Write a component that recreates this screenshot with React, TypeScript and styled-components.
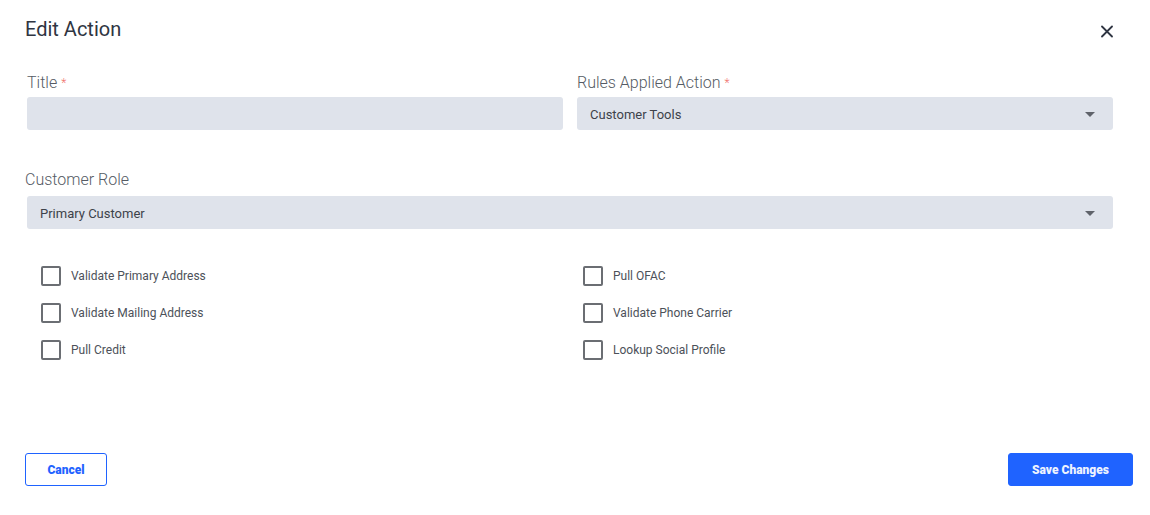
import styled, { createGlobalStyle } from 'styled-components';

const GlobalStyle = createGlobalStyle`
    body {
        margin: 0;
        background: #fff;
        font-family: Roboto, "Liberation Sans", Arial, sans-serif;
    }
`;

const Modal = styled.div`
    box-sizing: border-box;
    height: 515px;
    padding: 17px 17px 29px 25px;
    display: flex;
    flex-direction: column;
`;

const Header = styled.div`
    display: flex;
    justify-content: space-between;
    align-items: flex-start;
`;

const Heading = styled.h2`
    margin: 0;
    font-size: 20px;
    line-height: 24px;
    font-weight: 400;
    color: #2f3542;
`;

const CloseButton = styled.button`
    border: none;
    background: none;
    padding: 0;
    margin: 8px 20px 0 0;
    width: 12px;
    height: 13px;
    cursor: pointer;
    display: flex;
`;

const Form = styled.div`
    padding: 0 20px 0 2px;
`;

const Row = styled.div<{ $top: number }>`
    display: grid;
    grid-template-columns: 1fr 1fr;
    column-gap: 14px;
    margin-top: ${(p) => p.$top}px;
`;

const Field = styled.div<{ $wide?: boolean }>`
    grid-column: ${(p) => (p.$wide ? '1 / span 2' : 'auto')};
`;

const Label = styled.label<{ $shift?: number; $gap?: number }>`
    display: block;
    margin: 0 0 ${(p) => p.$gap ?? 4}px ${(p) => p.$shift ?? 0}px;
    font-size: 16px;
    line-height: 20px;
    font-weight: 300;
    color: #555b64;
`;

const Required = styled.span`
    color: #f0706a;
    font-size: 12px;
    vertical-align: top;
    margin-left: 4px;
`;

const Input = styled.div`
    height: 33px;
    border-radius: 3px;
    background: #dfe3eb;
`;

const Select = styled.div`
    box-sizing: border-box;
    height: 33px;
    border-radius: 3px;
    background: #dfe3eb;
    padding: 1px 18px 0 13px;
    display: flex;
    align-items: center;
    justify-content: space-between;
    font-size: 13px;
    color: #3d424a;
`;

const Caret = styled.span`
    width: 0;
    height: 0;
    border-left: 5px solid transparent;
    border-right: 5px solid transparent;
    border-top: 5px solid #5f636a;
`;

const Checks = styled.div`
    display: grid;
    grid-template-columns: 542px 542px;
    row-gap: 17px;
    margin-top: 37px;
    padding-left: 14px;
`;

const CheckItem = styled.label`
    display: flex;
    align-items: center;
    gap: 10px;
    font-size: 12px;
    color: #4c5159;
    cursor: pointer;
`;

const Box = styled.span`
    box-sizing: border-box;
    width: 20px;
    height: 20px;
    border: 2px solid #6b6e73;
    border-radius: 2px;
`;

const Footer = styled.div`
    margin-top: auto;
    display: flex;
    justify-content: space-between;
`;

const Button = styled.button<{ $primary?: boolean }>`
    box-sizing: border-box;
    height: 33px;
    padding: 0 20px;
    border-radius: 3px;
    border: 1px solid #1f63ff;
    background: ${(p) => (p.$primary ? '#1f63ff' : '#fff')};
    color: ${(p) => (p.$primary ? '#eef3ff' : '#1f63ff')};
    font-family: Roboto, "Liberation Sans", Arial, sans-serif;
    font-size: 12px;
    font-weight: 900;
    cursor: pointer;
    width: ${(p) => (p.$primary ? '125px' : '82px')};
`;

const leftChecks = ['Validate Primary Address', 'Validate Mailing Address', 'Pull Credit'];
const rightChecks = ['Pull OFAC', 'Validate Phone Carrier', 'Lookup Social Profile'];

function App() {
    const items: string[] = [];
    leftChecks.forEach((l, i) => {
        items.push(l);
        items.push(rightChecks[i]);
    });

    return (
        <>
            <GlobalStyle />
            <Modal>
                <Header>
                    <Heading>Edit Action</Heading>
                    <CloseButton aria-label="Close">
                        <svg width="12" height="13" viewBox="0 0 12 13">
                            <path d="M1 1.5L11 11.5M11 1.5L1 11.5" stroke="#2f3542" strokeWidth="1.8" strokeLinecap="round" />
                        </svg>
                    </CloseButton>
                </Header>
                <Form>
                    <Row $top={32}>
                        <Field>
                            <Label>Title<Required>*</Required></Label>
                            <Input />
                        </Field>
                        <Field>
                            <Label>Rules Applied Action<Required>*</Required></Label>
                            <Select>
                                Customer Tools
                                <Caret />
                            </Select>
                        </Field>
                    </Row>
                    <Row $top={40}>
                        <Field $wide>
                            <Label $shift={-2} $gap={6}>Customer Role</Label>
                            <Select>
                                Primary Customer
                                <Caret />
                            </Select>
                        </Field>
                    </Row>
                    <Checks>
                        {items.map((item) => (
                            <CheckItem key={item}>
                                <Box />
                                {item}
                            </CheckItem>
                        ))}
                    </Checks>
                </Form>
                <Footer>
                    <Button>Cancel</Button>
                    <Button $primary>Save Changes</Button>
                </Footer>
            </Modal>
        </>
    );
}

export default App;
